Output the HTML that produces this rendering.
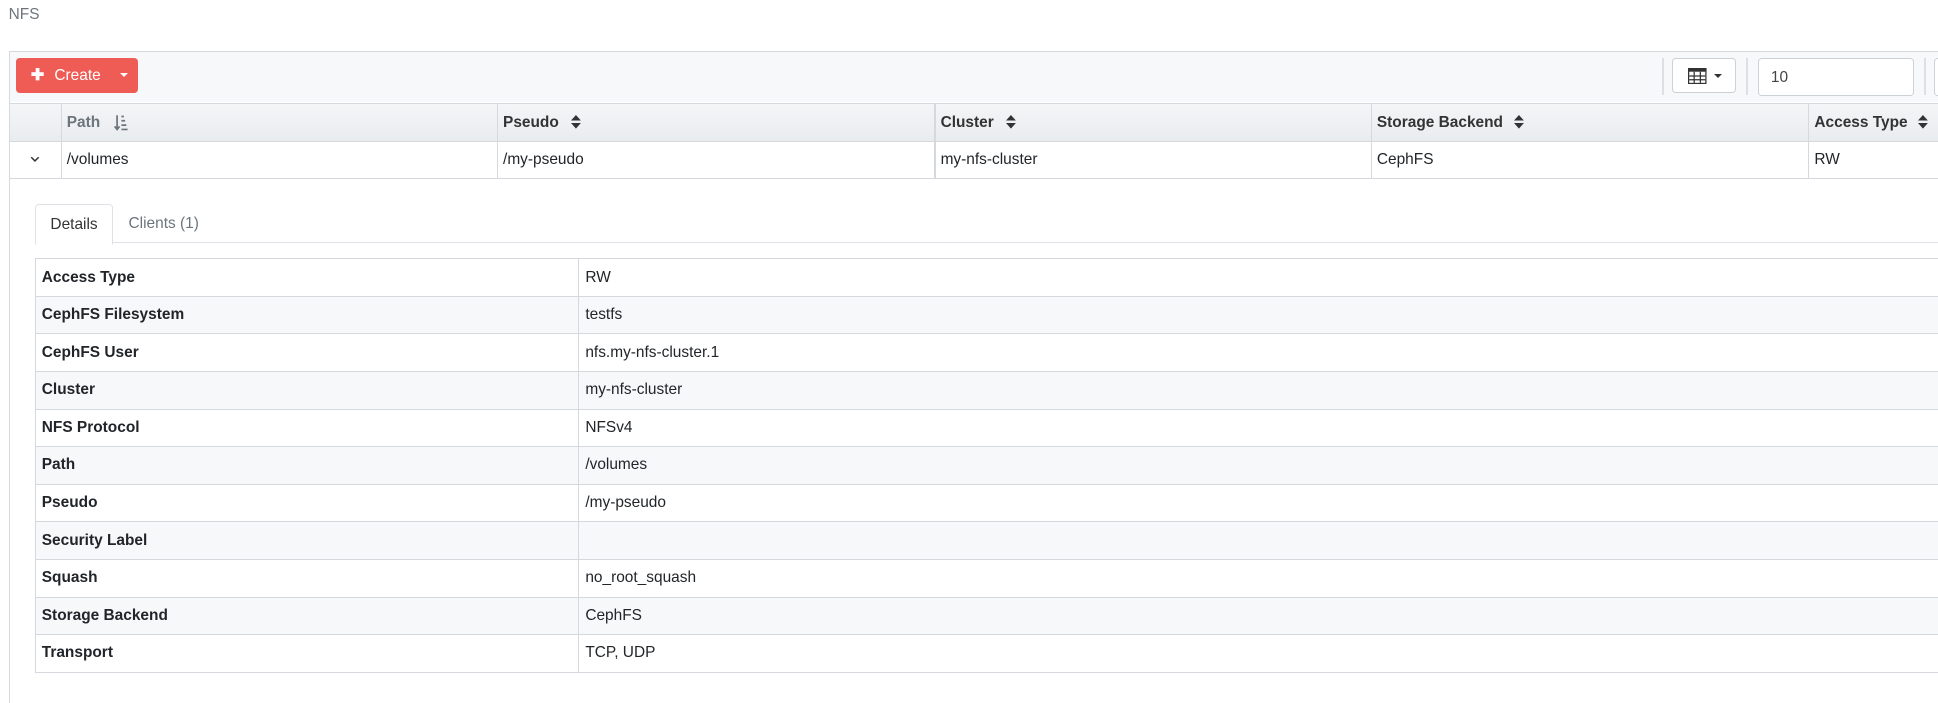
<!DOCTYPE html>
<html><head><meta charset="utf-8"><style>
html,body{margin:0;padding:0;background:#fff;overflow:hidden}
body{width:1568px;height:569px;zoom:1.23597;position:relative;font-family:"Liberation Sans",Arial,sans-serif;font-size:12.5px;color:#212529}
.a{position:absolute}
.nfs{left:7px;top:5px;color:#6c757d;font-size:12.5px}
.panel{left:7px;top:41px;width:1570px;height:540px;border:1px solid #d5d9de;background:#fff}
.tool{left:7px;top:41px;width:1570px;height:41px;background:#f7f8fa;border:1px solid #d5d9de;border-bottom:none}
.btn{left:13px;top:47px;width:99px;height:28px;background:#ef5c55;border-radius:3px;color:#fff}
.sep{width:1px;background:#dcdfe3;top:47px;height:30px}
.hdr{left:8px;top:83px;width:1570px;height:30px;background:linear-gradient(#f4f5f7,#e9ecef);border-top:1px solid #d5d9de;border-bottom:1px solid #d5d9de}
.th{top:84px;height:30px;line-height:30px;font-weight:bold;color:#333;padding-left:5px}
.vl{width:1px;background:#d5d9de}
.td{top:114px;height:30px;line-height:30px;padding-left:5px}
table.d{position:absolute;left:28px;top:209px;width:1560px;border-collapse:collapse}
table.d td{height:29.6px;border:1px solid #d5d9de;padding:0 5px;font-size:12.5px}
table.d td:first-child{width:429px;font-weight:bold}
table.d tr:nth-child(even) td{background:#f7f8fa}
</style></head><body>
<div class="a nfs">NFS</div>
<div class="a panel"></div>
<div class="a tool"></div>
<div class="a btn"><span class="a" style="left:12px;top:6px;font-size:13px;font-weight:bold">✚</span><span class="a" style="left:31px;top:7px">Create</span><span class="a" style="left:84px;top:12px;width:0;height:0;border-left:3.5px solid transparent;border-right:3.5px solid transparent;border-top:4px solid #fff"></span></div>
<div class="a sep" style="left:1345px"></div>
<div class="a" style="left:1353px;top:47px;width:50px;height:27px;border:1px solid #ccd1d6;border-radius:3px;background:#fff">
<svg class="a" style="left:12px;top:7px" width="16" height="13" viewBox="0 0 16 13"><rect x="0.5" y="0.5" width="14" height="12" fill="none" stroke="#333"/><rect x="0" y="0" width="15" height="3" fill="#333"/><path d="M5 3V12M10 3V12M1 6.5H14M1 9.5H14" stroke="#333"/></svg>
<span class="a" style="left:33px;top:12px;width:0;height:0;border-left:3.5px solid transparent;border-right:3.5px solid transparent;border-top:4px solid #333"></span></div>
<div class="a sep" style="left:1413px"></div>
<div class="a" style="left:1422px;top:47px;width:125px;height:29px;border:1px solid #ccd1d6;border-radius:3px;background:#fff"><span class="a" style="left:10px;top:8px;color:#444">10</span></div>
<div class="a sep" style="left:1557px"></div>
<div class="a" style="left:1565px;top:47px;width:10px;height:29px;border:1px solid #ccd1d6;border-radius:3px;background:#fff"></div>
<div class="a hdr"></div>
<div class="a" style="left:8px;top:144px;width:1570px;height:1px;background:#d5d9de"></div>
<div class="a vl" style="left:49px;top:84px;height:60px"></div>
<div class="a vl" style="left:402px;top:84px;height:60px"></div>
<div class="a vl" style="left:756px;top:84px;height:60px"></div>
<div class="a vl" style="left:1109px;top:84px;height:60px"></div>
<div class="a vl" style="left:1463px;top:84px;height:60px"></div>
<div class="a th" style="left:49px;color:#6c757d">Path</div>
<svg class="a" style="left:92px;top:92px" width="12" height="14" viewBox="0 0 12 14"><path d="M2.5 1V12M0.5 10L2.5 12.5L4.5 10" stroke="#6c757d" stroke-width="1.4" fill="none"/><path d="M6 2h2M6 5.5h3M6 9h4M6 12.5h5" stroke="#6c757d" stroke-width="1.4"/></svg>
<div class="a th" style="left:402px">Pseudo</div>
<div class="a th" style="left:756px">Cluster</div>
<div class="a th" style="left:1109px">Storage Backend</div>
<div class="a th" style="left:1463px">Access Type</div>
<svg class="a" style="left:462px;top:93px" width="8" height="11"><path d="M0 4.5L4 0L8 4.5ZM0 6.5L4 11L8 6.5Z" fill="#333"/></svg>
<svg class="a" style="left:814px;top:93px" width="8" height="11"><path d="M0 4.5L4 0L8 4.5ZM0 6.5L4 11L8 6.5Z" fill="#333"/></svg>
<svg class="a" style="left:1225px;top:93px" width="8" height="11"><path d="M0 4.5L4 0L8 4.5ZM0 6.5L4 11L8 6.5Z" fill="#333"/></svg>
<svg class="a" style="left:1552px;top:93px" width="8" height="11"><path d="M0 4.5L4 0L8 4.5ZM0 6.5L4 11L8 6.5Z" fill="#333"/></svg>
<svg class="a" style="left:24px;top:126px" width="8" height="6"><path d="M1 1L4 4L7 1" stroke="#333" stroke-width="1.2" fill="none"/></svg>
<div class="a td" style="left:49px">/volumes</div>
<div class="a td" style="left:402px">/my-pseudo</div>
<div class="a td" style="left:756px">my-nfs-cluster</div>
<div class="a td" style="left:1109px">CephFS</div>
<div class="a td" style="left:1463px">RW</div>
<div class="a" style="left:28px;top:196px;width:1560px;height:1px;background:#dee2e6"></div>
<div class="a" style="left:28px;top:165px;width:62px;height:32px;border:1px solid #dee2e6;border-bottom:1px solid #fff;border-radius:3px 3px 0 0;background:#fff"><span class="a" style="left:12px;top:9px;color:#333">Details</span></div>
<div class="a" style="left:104px;top:174px;color:#6c757d">Clients (1)</div>
<table class="d">
<tr><td>Access Type</td><td>RW</td></tr>
<tr><td>CephFS Filesystem</td><td>testfs</td></tr>
<tr><td>CephFS User</td><td>nfs.my-nfs-cluster.1</td></tr>
<tr><td>Cluster</td><td>my-nfs-cluster</td></tr>
<tr><td>NFS Protocol</td><td>NFSv4</td></tr>
<tr><td>Path</td><td>/volumes</td></tr>
<tr><td>Pseudo</td><td>/my-pseudo</td></tr>
<tr><td>Security Label</td><td></td></tr>
<tr><td>Squash</td><td>no_root_squash</td></tr>
<tr><td>Storage Backend</td><td>CephFS</td></tr>
<tr><td>Transport</td><td>TCP, UDP</td></tr>
</table>
</body></html>
